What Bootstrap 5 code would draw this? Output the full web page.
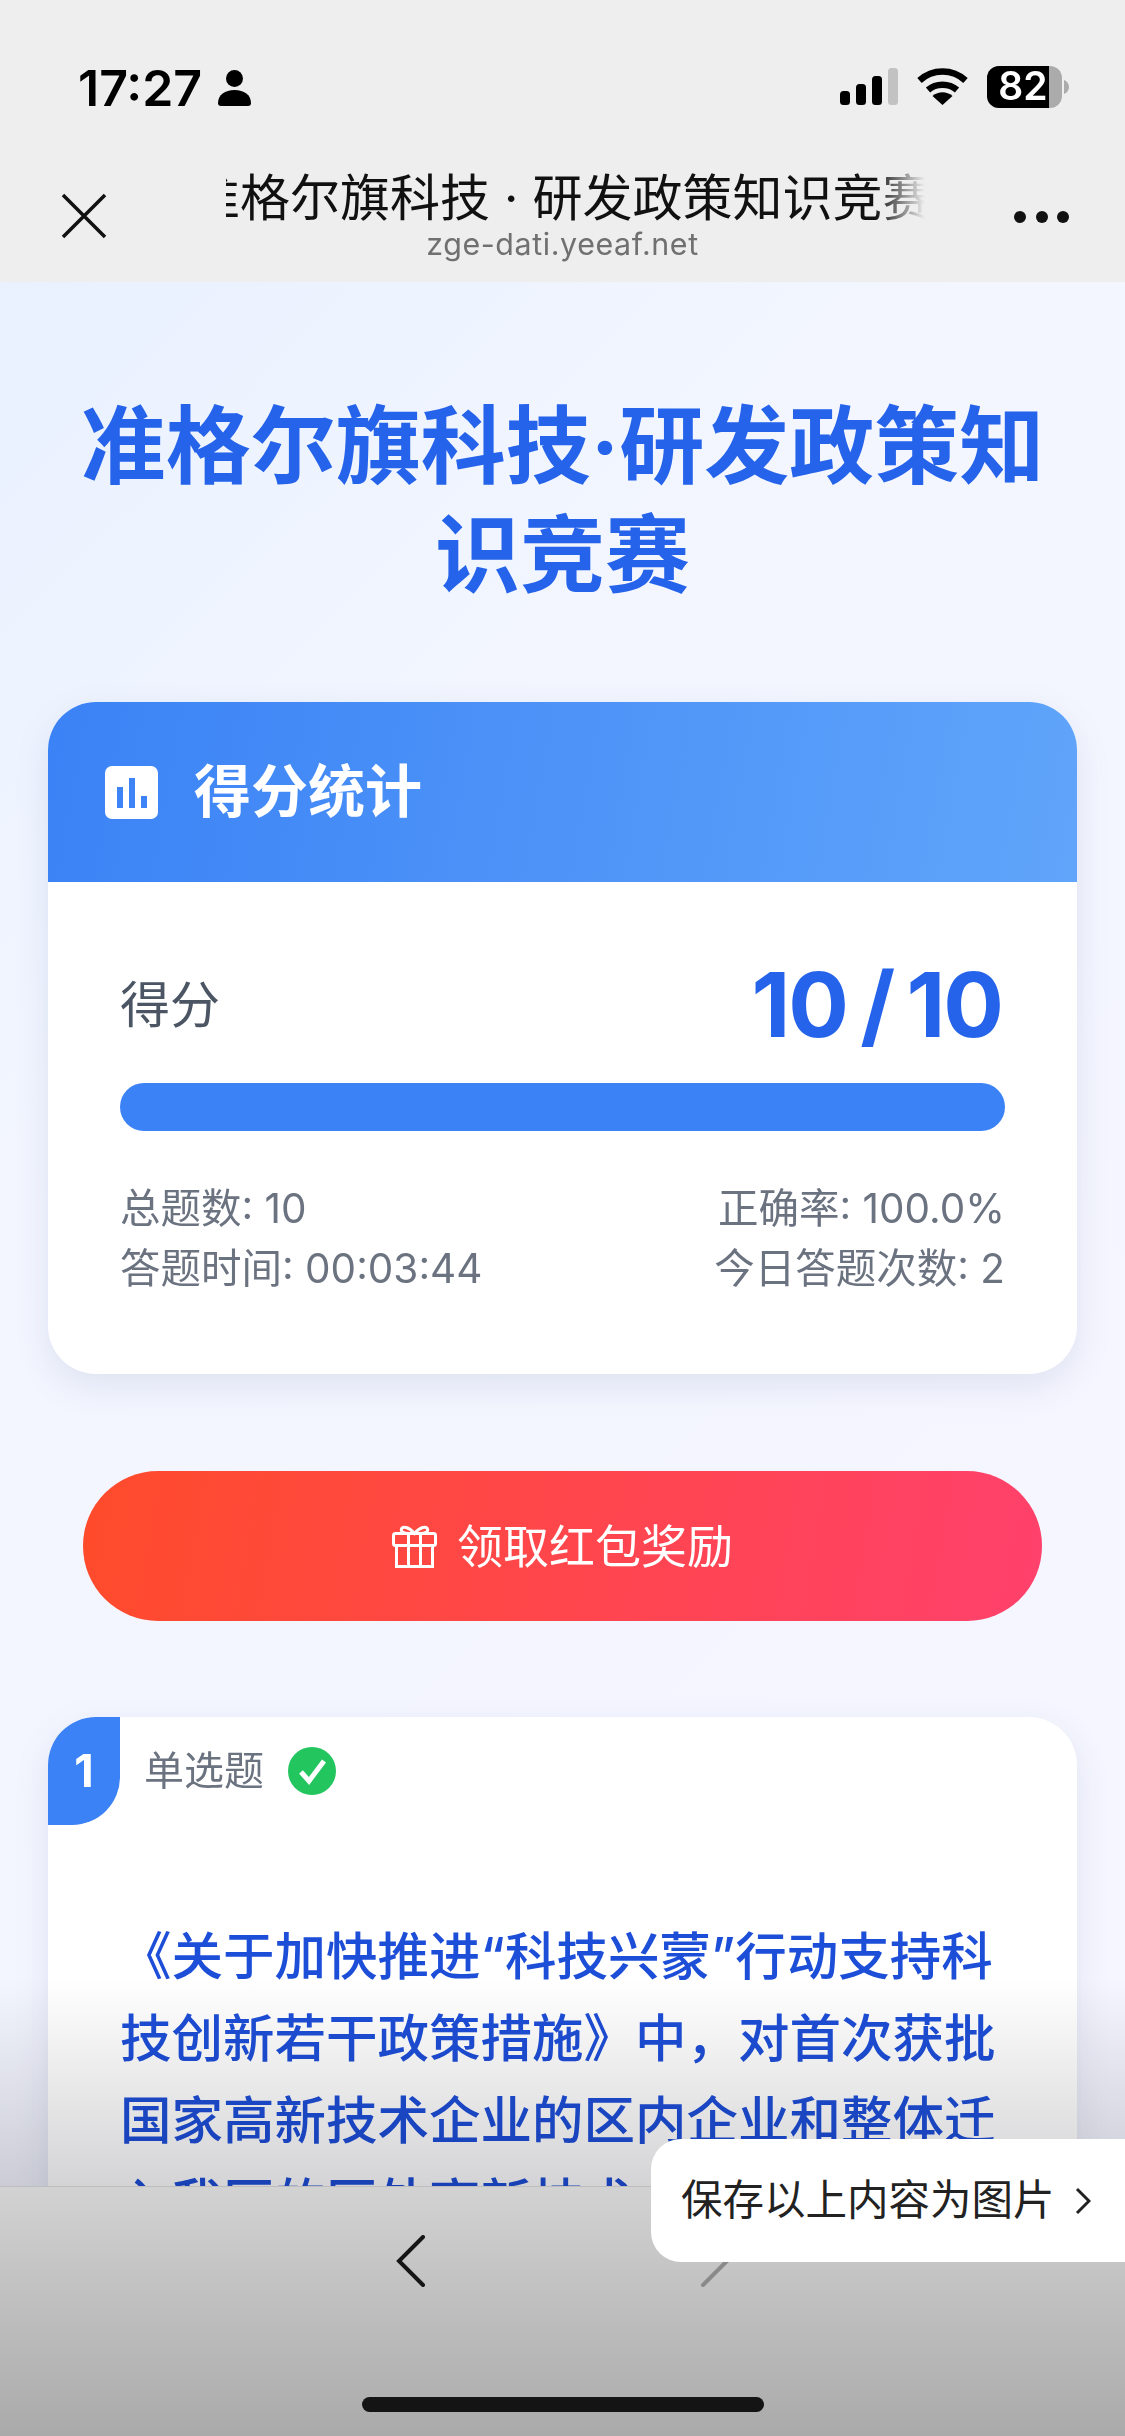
<!DOCTYPE html>
<html lang="zh-CN">
<head>
  <meta charset="UTF-8">
  <meta name="viewport" content="width=device-width, initial-scale=1.0">
  <title>准格尔旗科技·研发政策知识竞赛</title>
  <link href="https://cdn.jsdelivr.net/npm/bootstrap@5.3.2/dist/css/bootstrap.min.css" rel="stylesheet">
  <style>
    html, body { height: 2436px; overflow: hidden; }
    body {
      font-family: Inter, "Noto Sans CJK SC", sans-serif;
      background: linear-gradient(135deg, #e6f0ff 0%, #f3f6ff 35%, #f6f6ff 100%);
      position: relative;
    }
    .phone-top { background: #eeeeee; height: 282px; }
    .status-row { height: 152px; padding: 66px 56px 0 78px; }
    .clock { font-size: 50px; font-weight: 600; line-height: 44px; color: #000; }
    .browser-row { height: 130px; position: relative; }
    .close-ico { position: absolute; left: 60px; top: 40px; }
    .more-ico { position: absolute; left: 1013px; top: 58px; }
    .page-name {
      width: 699px; margin-left: 226px; overflow: hidden; white-space: nowrap;
      font-size: 50px; line-height: 60px; color: #111; position: relative; top: 16px;
    }
    .page-name span { margin-left: -36px; }
    .page-name::after {
      content: ""; position: absolute; right: 0; top: 0; width: 50px; height: 100%;
      background: linear-gradient(90deg, rgba(238,238,238,0), #eeeeee);
    }
    .page-url { text-align: center; font-size: 30.4px; line-height: 32px; color: #707070; letter-spacing: 0.6px; margin-top: 16px; padding-right: 0; }
    .page-title {
      font-size: 85px; font-weight: 700; line-height: 109px; color: #2563eb; text-align: center;
      padding: 110px 40px 0; margin: 0; height: 420px;
    }
    .panel { margin: 0 48px; background: #fff; border-radius: 48px; box-shadow: 0 12px 36px rgba(40,60,120,.1); overflow: hidden; }
    .panel-head {
      height: 180px; background: linear-gradient(100deg, #3b82f6, #60a5fa); color: #fff; padding-left: 57px; gap: 36px;
      font-size: 57px; font-weight: 700;
    }
    .panel-body { padding: 69px 72px 0 72px; height: 492px; }
    .score-label { font-size: 50px; color: #4b5563; }
    .score-value { font-size: 90px; font-weight: 700; color: #2563eb; line-height: 108px; padding-right: 3px; letter-spacing: -2px; word-spacing: -6px; }
    .score-bar { height: 48px; background: #3b82f6; border-radius: 24px; margin: 24px 0 48px; }
    .meta-row { font-size: 40.5px; line-height: 60px; color: #6b7280; }
    .gift-btn {
      margin: 97px 83px 96px; height: 150px; border-radius: 75px; color: #fff; font-size: 46px; gap: 20px;
      background: linear-gradient(100deg, #ff4b2b, #ff416c);
    }
    .question { height: 900px; position: relative; }
    .q-num {
      width: 72px; height: 108px; background: #3b82f6; color: #fff; font-size: 45px; font-weight: 700;
      border-bottom-right-radius: 48px; flex: none;
    }
    .q-type { font-size: 40px; color: #6b7280; }
    .q-head { gap: 24px; }
    .q-text { font-size: 51.5px; line-height: 82px; color: #1d4ed8; font-weight: 500; padding: 90px 72px 0; }
    .bottom-fade {
      position: absolute; left: 0; right: 0; top: 1980px; height: 206px; mix-blend-mode: multiply;
      background: linear-gradient(180deg, #ffffff, #d4d4d6);
    }
    .bottom-bar {
      position: absolute; left: 0; right: 0; top: 2186px; height: 250px;
      background: linear-gradient(180deg, #d2d2d2, #aaaaaa); border-top: 1px solid #bdbdbd;
    }
    .back-ico { position: absolute; left: 394px; top: 48px; }
    .fwd-ico { position: absolute; left: 696px; top: 48px; }
    .home-line { position: absolute; left: 362px; top: 210px; width: 402px; height: 15px; border-radius: 8px; background: #141414; }
    .save-tip {
      position: absolute; left: 651px; top: 2139px; width: 474px; height: 123px; background: #fff;
      border-radius: 30px 0 0 30px; font-size: 41.5px; color: #222; padding-left: 30px; gap: 20px;
    }
  </style>
</head>

<body>
  <div class="phone-top">
    <div class="status-row d-flex justify-content-between align-items-start">
      <div class="d-flex align-items-center" style="gap:16px">
        <span class="clock">17:27</span>
        <svg width="33" height="36" viewBox="0 0 33 36" fill="#000"><circle cx="16.5" cy="8.5" r="8.5"/><path d="M0 33c0-8 7-13 16.500-13S33 25 33 33c0 2-1 3-3 3H3c-2 0-3-1-3-3z"/></svg>
      </div>
      <div class="d-flex align-items-center" style="gap:19px">
        <svg width="58" height="38" viewBox="0 0 58 38"><rect x="0" y="23" width="10" height="14" rx="3.500"/><rect x="16" y="16" width="10" height="21" rx="3.500"/><rect x="32" y="8" width="10" height="29" rx="3.500"/><rect x="48" y="0" width="10" height="37" rx="3.500" fill="#c2c2c2"/></svg>
        <svg width="51" height="38" viewBox="0 0 51 38" fill="none" stroke="#000" stroke-width="6.500"><path d="M2.500 12.500c13-12 33-12 46 0"/><path d="M11 22c8-7 21-7 29 0"/><path d="M25.500 37l-10-9c6-5 14-5 20 0z" fill="#000" stroke="none"/></svg>
        <svg width="82" height="42" viewBox="0 0 82 42"><rect x="0" y="0" width="75" height="42" rx="12" fill="#ababab"/><path d="M12 0h50v42H12A12 12 0 0 1 0 30V12A12 12 0 0 1 12 0z" fill="#000"/><path d="M77 14c3 1 5 4 5 7s-2 6-5 7z" fill="#ababab"/><text x="36" y="34" text-anchor="middle" font-family="Inter, sans-serif" font-size="39" font-weight="600" fill="#fff">82</text></svg>
      </div>
    </div>
    <div class="browser-row">
      <svg class="close-ico" width="48" height="48" viewBox="0 0 48 48" fill="none" stroke="#111" stroke-width="3.500"><path d="M3 3l42 42M45 3L3 45"/></svg>
      <div class="page-name"><span>准格尔旗科技 · 研发政策知识竞赛</span></div>
      <div class="page-url">zge-dati.yeeaf.net</div>
      <svg class="more-ico" width="56" height="14" viewBox="0 0 56 14" fill="#111"><circle cx="7" cy="7" r="6"/><circle cx="29" cy="7" r="6"/><circle cx="50" cy="7" r="6"/></svg>
    </div>
  </div>

  <h1 class="page-title">准格尔旗科技·研发政策知识竞赛</h1>

  <div class="panel">
    <div class="panel-head d-flex align-items-center">
      <svg width="53" height="53" viewBox="0 0 53 53"><rect width="53" height="53" rx="7" fill="#fff"/><rect x="12" y="21" width="6" height="21" fill="#3f84f6"/><rect x="24" y="12" width="6" height="30" fill="#3f84f6"/><rect x="36" y="30" width="6" height="12" fill="#3f84f6"/></svg>
      <span>得分统计</span>
    </div>
    <div class="panel-body">
      <div class="d-flex justify-content-between align-items-center">
        <span class="score-label">得分</span>
        <span class="score-value">10 / 10</span>
      </div>
      <div class="score-bar" style="width:100%"></div>
      <div class="meta-row d-flex justify-content-between"><span>总题数: 10</span><span>正确率: 100.0%</span></div>
      <div class="meta-row d-flex justify-content-between"><span>答题时间: 00:03:44</span><span>今日答题次数: 2</span></div>
    </div>
  </div>

  <div class="gift-btn d-flex align-items-center justify-content-center">
    <svg width="45" height="43" viewBox="0 0 45 43" fill="none" stroke="#fff" stroke-width="3"><rect x="1.500" y="8.500" width="42" height="12" rx="2"/><path d="M4.500 20.500v21h36v-21M16.500 8.500v33M28.500 8.500v33"/><path d="M16.500 8.500C12 8.500 8.500 7 9.500 4s7-2.500 13 4.500c6-7 12-7.500 13-4.500s-2.500 4.500-7 4.500"/></svg>
    <span>领取红包奖励</span>
  </div>

  <div class="panel question">
    <div class="q-head d-flex align-items-center">
      <div class="q-num d-flex align-items-center justify-content-center">1</div>
      <span class="q-type">单选题</span>
      <svg width="48" height="48" viewBox="0 0 48 48"><circle cx="24" cy="24" r="24" fill="#22c55e"/><path d="M13 25l8 9 15-20" fill="none" stroke="#fff" stroke-width="5"/></svg>
    </div>
    <div class="q-text">《关于加快推进“科技兴蒙”行动支持科技创新若干政策措施》中，对首次获批国家高新技术企业的区内企业和整体迁入我区的区外高新技术企业</div>
  </div>

  <div class="bottom-fade"></div>
  <div class="bottom-bar">
    <svg class="back-ico" width="32" height="52" viewBox="0 0 32 52" fill="none" stroke="#151515" stroke-width="4" stroke-linecap="round"><path d="M29 2L5 26l24 24"/></svg>
    <svg class="fwd-ico" width="36" height="52" viewBox="0 0 36 52" fill="none" stroke="#8a8a8a" stroke-width="4" stroke-linecap="round"><path d="M7 2l24 24L7 50"/></svg>
    <div class="home-line"></div>
  </div>
  <div class="save-tip d-flex align-items-center">
    <span>保存以上内容为图片</span>
    <svg width="16" height="28" viewBox="0 0 16 28" fill="none" stroke="#222" stroke-width="3"><path d="M2 2l12 12L2 26"/></svg>
  </div>

  <script src="https://cdn.jsdelivr.net/npm/bootstrap@5.3.2/dist/js/bootstrap.bundle.min.js"></script>
</body>
</html>
